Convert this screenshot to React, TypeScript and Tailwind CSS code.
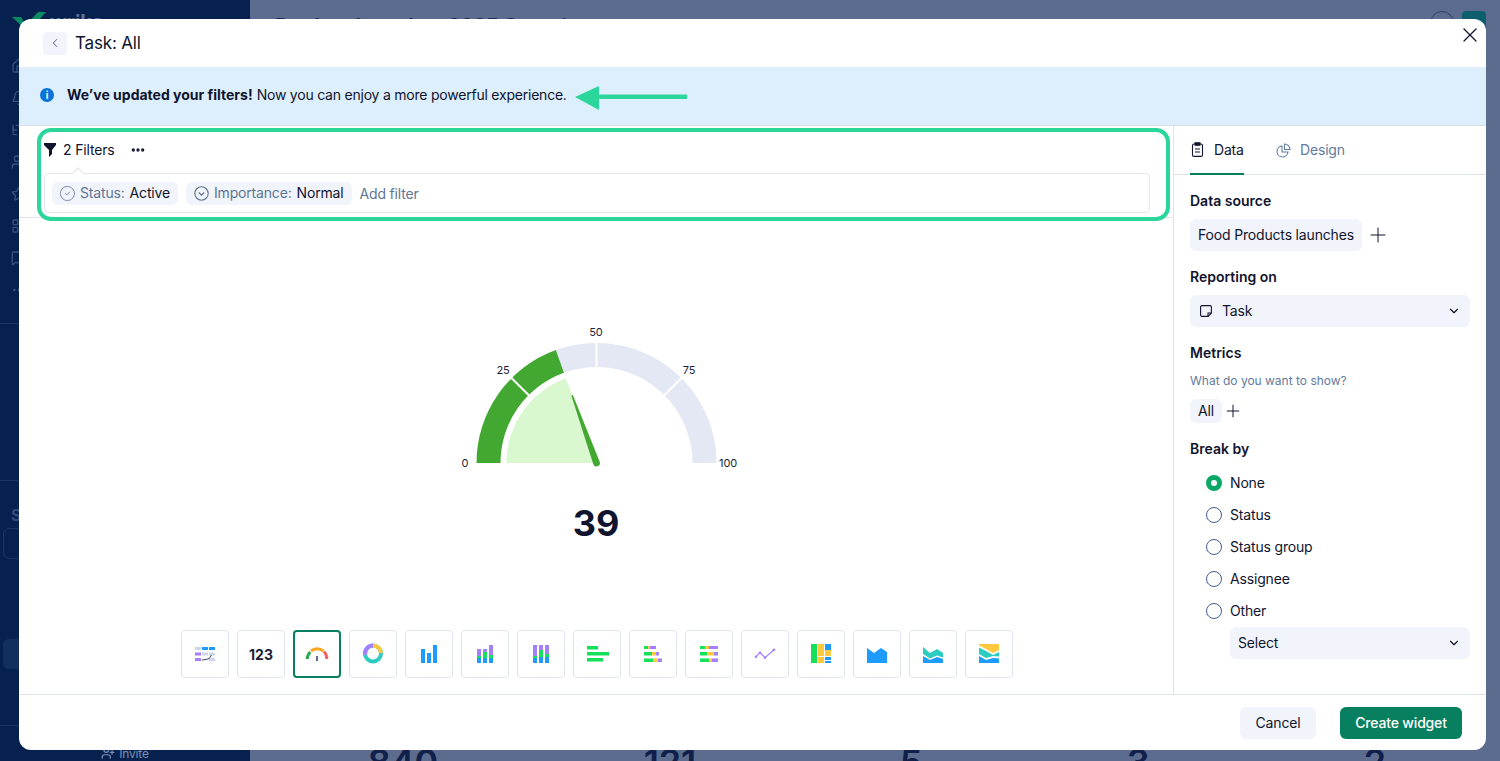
import { ReactNode } from "react"
import { Bell, ChevronDown, ChevronLeft, CircleCheck, Ellipsis, House, LayoutGrid, ListTree, MessageSquare, Plus, Star, UserPlus, Users, X } from "lucide-react"

const BLUE = "#1e9bff"
const PURPLE = "#a47fff"
const GREEN = "#14e05a"
const YELLOW = "#ffc83d"
const TEAL = "#2ccdc0"
const LIGHT = "#cdd6ea"

// point on a half circle, t=0 is the left end and t=1 the right end
function pt(cx: number, cy: number, r: number, t: number) {
  const a = Math.PI * (1 - t)
  return [cx + r * Math.cos(a), cy - r * Math.sin(a)]
}

function band(cx: number, cy: number, r1: number, r2: number, t1: number, t2: number) {
  const [ax, ay] = pt(cx, cy, r2, t1)
  const [bx, by] = pt(cx, cy, r2, t2)
  const [dx, dy] = pt(cx, cy, r1, t2)
  const [ex, ey] = pt(cx, cy, r1, t1)
  return `M${ax} ${ay}A${r2} ${r2} 0 0 1 ${bx} ${by}L${dx} ${dy}A${r1} ${r1} 0 0 0 ${ex} ${ey}Z`
}

function needle(cx: number, cy: number, len: number, t: number) {
  const [nx, ny] = pt(cx, cy, len, t)
  const ux = (nx - cx) / len
  const uy = (ny - cy) / len
  const tip = 0.8
  const base = 3.4
  return `M${nx - uy * tip} ${ny + ux * tip}L${cx - uy * base} ${cy + ux * base}A${base} ${base} 0 1 1 ${cx + uy * base} ${cy - ux * base}L${nx + uy * tip} ${ny - ux * tip}Z`
}

function Gauge() {
  const cx = 150.5
  const cy = 139
  const [sx, sy] = pt(cx, cy, 90, 0.39)
  return (
    <svg width="300" height="150" viewBox="0 0 300 150" className="shrink-0">
      <path d={band(cx, cy, 96, 120, 0.39, 1)} fill="#e4e8f4" />
      <path d={band(cx, cy, 96, 120, 0, 0.39)} fill="#43a832" />
      {[0.25, 0.5, 0.75].map((t) => {
        const [x1, y1] = pt(cx, cy, 94, t)
        const [x2, y2] = pt(cx, cy, 122, t)
        return <line key={t} x1={x1} y1={y1} x2={x2} y2={y2} stroke="#fff" strokeWidth="2" />
      })}
      <path d={`M${cx - 90} ${cy}A90 90 0 0 1 ${sx} ${sy}L${cx} ${cy}Z`} fill="#d9f8cf" />
      <path d={needle(cx, cy, 72, 0.39)} fill="#43a832" />
      <g fontSize="11" fill="#1a1f36" textAnchor="middle">
        <text x="19" y="143">0</text>
        <text x="57" y="50">25</text>
        <text x="150" y="12">50</text>
        <text x="243" y="50">75</text>
        <text x="282" y="143">100</text>
      </g>
    </svg>
  )
}

function Rects({ items }: { items: [number, number, number, number, string][] }) {
  return (
    <>
      {items.map(([x, y, w, h, c], i) => (
        <rect key={i} x={x} y={y} width={w} height={h} fill={c} />
      ))}
    </>
  )
}

const chartIcons: ReactNode[] = [
  <>
    <Rects items={[
      [14, 17, 6, 3, LIGHT], [21, 17, 6, 3, BLUE], [28, 17, 6, 3, BLUE],
      [14, 22.5, 6, 3, PURPLE], [21, 22.5, 6, 3, LIGHT], [28, 22.5, 6, 3, LIGHT],
      [14, 28, 6, 3, PURPLE], [28, 28, 6, 3, LIGHT],
    ]} />
    <path d="M21 30l4-.5 3-1 2.5-3.5" fill="none" stroke="#3c4a68" strokeWidth="1" />
  </>,
  null,
  <>
    <path d="M14.3 29a10 10 0 0 1 3-7" fill="none" stroke="#2fa84f" strokeWidth="3" />
    <path d="M18 21a10 10 0 0 1 12.5 0" fill="none" stroke="#ffa51f" strokeWidth="3" />
    <path d="M31 21.5a10 10 0 0 1 2.8 7.5" fill="none" stroke="#f5606a" strokeWidth="3" />
    <rect x="23.2" y="26" width="1.6" height="5" fill="#3c4a68" />
  </>,
  <>
    <circle cx="24" cy="23.5" r="8" fill="none" stroke={TEAL} strokeWidth="4" />
    <path d="M16.2 25A8 8 0 0 1 24 15.5" fill="none" stroke={PURPLE} strokeWidth="4" />
    <path d="M24 15.5A8 8 0 0 1 32 23" fill="none" stroke={YELLOW} strokeWidth="4" />
  </>,
  <Rects items={[[16, 19, 4, 14, BLUE], [22, 23, 4, 10, BLUE], [28, 15, 4, 18, BLUE]]} />,
  <Rects items={[
    [16, 19, 4, 7, PURPLE], [16, 26, 4, 2, GREEN], [16, 28, 4, 5, BLUE],
    [22, 19, 4, 3, PURPLE], [22, 22, 4, 6, GREEN], [22, 28, 4, 5, BLUE],
    [28, 15, 4, 10, PURPLE], [28, 25, 4, 3, GREEN], [28, 28, 4, 5, BLUE],
  ]} />,
  <Rects items={[
    [16, 15, 4, 11, PURPLE], [16, 26, 4, 2, GREEN], [16, 28, 4, 5, BLUE],
    [22, 15, 4, 5, PURPLE], [22, 20, 4, 7, GREEN], [22, 27, 4, 6, BLUE],
    [28, 15, 4, 9, PURPLE], [28, 24, 4, 3, GREEN], [28, 27, 4, 6, BLUE],
  ]} />,
  <Rects items={[[14, 16, 11, 3.5, GREEN], [14, 22, 22, 3.5, GREEN], [14, 28, 16, 3.5, GREEN]]} />,
  <Rects items={[
    [15, 16, 4, 3, GREEN], [19, 16, 2, 3, YELLOW], [21, 16, 6, 3, PURPLE],
    [15, 22, 8, 3.5, GREEN], [23, 22, 4, 3.5, YELLOW], [27, 22, 3, 3.5, PURPLE],
    [15, 28.5, 9, 3.5, GREEN], [24, 28.5, 5, 3.5, YELLOW], [29, 28.5, 4, 3.5, PURPLE],
  ]} />,
  <Rects items={[
    [15, 16, 5, 3, GREEN], [20, 16, 4, 3, YELLOW], [24, 16, 9, 3, PURPLE],
    [15, 22, 7, 3.5, GREEN], [22, 22, 7, 3.5, YELLOW], [29, 22, 4, 3.5, PURPLE],
    [15, 28.5, 9, 3.5, GREEN], [24, 28.5, 3, 3.5, YELLOW], [27, 28.5, 6, 3.5, PURPLE],
  ]} />,
  <g fill={PURPLE}>
    <path d="M15 26.7L19 22.7L24 27.7L33 19.7" fill="none" stroke={PURPLE} strokeWidth="1.2" />
    <circle cx="15" cy="26.7" r="1.3" />
    <circle cx="19" cy="22.7" r="1.3" />
    <circle cx="24" cy="27.7" r="1.3" />
    <circle cx="33" cy="19.7" r="1.3" />
  </g>,
  <Rects items={[
    [14, 14, 6, 19, GREEN], [21, 14, 6, 12, YELLOW], [21, 27, 6, 6, YELLOW],
    [28, 14, 6, 6, BLUE], [28, 20, 6, 6, YELLOW], [28, 27, 6, 3, BLUE], [28, 31, 6, 2, BLUE],
  ]} />,
  <path d="M14 18L21 23L28 18L34 22V33H14Z" fill={BLUE} />,
  <>
    <path d="M14 17L21 23L28 19L34 23V27.5L28 25.5L21 28.5L14 24Z" fill={TEAL} />
    <path d="M14 26L21 30L28 27L34 29V33H14Z" fill={BLUE} />
  </>,
  <>
    <path d="M14 14H34V20L28 23L21 19L14 15.5Z" fill={YELLOW} />
    <path d="M14 17.5L21 21L28 25L34 22V26.5L28 26L21 28L14 24Z" fill={TEAL} />
    <path d="M14 26L21 30L28 28L34 28.5V33H14Z" fill={BLUE} />
  </>,
]

function ChartPicker() {
  return (
    <div className="flex gap-2 pb-4 mt-auto ml-[2px]">
      {chartIcons.map((icon, i) => (
        <div
          key={i}
          className={
            i === 2
              ? "w-12 h-12 rounded border-2 border-[#087f5f] bg-white flex items-center justify-center"
              : "w-12 h-12 rounded border border-[#e0e4f1] bg-white flex items-center justify-center"
          }
        >
          {icon ? (
            <svg width="48" height="48" viewBox="0 0 48 48" className="shrink-0">{icon}</svg>
          ) : (
            <span className="text-[14px] font-bold tracking-normal text-[#1a1f36]">123</span>
          )}
        </div>
      ))}
    </div>
  )
}

function FilterChip({ label, value, icon }: { label: string; value: string; icon: ReactNode }) {
  return (
    <div className="h-[23px] px-2 rounded-md bg-[#f1f4fa] flex items-center gap-[5px] text-sm text-[#5f7595]">
      {icon}
      <span>{label}</span>
      <span className="text-[#10142e]">{value}</span>
    </div>
  )
}

function Filters() {
  return (
    <div className="h-[92px] shrink-0 border-b border-[#dfe3ee] pl-[25px] pr-[23px]">
      <div className="h-[47px] flex items-center">
        <svg width="12" height="14" viewBox="0 0 12 14" className="shrink-0">
          <path d="M0 0H12V2L8 7V11L5 14V7L0 2Z" fill="#10142e" />
        </svg>
        <span className="ml-[7px] text-sm text-[#10142e]">2 Filters</span>
        <Ellipsis size={16} strokeWidth={3} className="ml-[16px] text-[#10142e]" />
      </div>
      <div className="relative h-10 border border-[#e3e6f0] rounded flex items-center pl-[7px] gap-2">
        <div className="absolute -top-[5px] left-[29px] w-2 h-2 rotate-45 bg-white border-l border-t border-[#e3e6f0]" />
        <FilterChip label="Status:" value="Active" icon={<CircleCheck size={17} strokeWidth={1.1} className="-ml-px -mr-px" />} />
        <FilterChip
          label="Importance:"
          value="Normal"
          icon={
            <svg width="15" height="15" viewBox="0 0 15 15" fill="none" stroke="currentColor" strokeWidth="1.1" className="shrink-0">
              <circle cx="7.5" cy="7.5" r="6.7" />
              <path d="M4.8 6.5l2.7 2.7 2.7-2.7" />
            </svg>
          }
        />
        <span className="text-sm mt-[2px] text-[#5f7595]">Add filter</span>
      </div>
    </div>
  )
}

function SectionTitle({ children }: { children: ReactNode }) {
  return <div className="text-sm font-semibold tracking-normal text-[#10142e] leading-5">{children}</div>
}

function Radio({ label, checked }: { label: string; checked?: boolean }) {
  return (
    <div className="h-8 flex items-center gap-2 text-sm text-[#10142e]">
      {checked ? (
        <div className="w-4 h-4 rounded-full border-[5px] border-[#0aa866] bg-white" />
      ) : (
        <div className="w-4 h-4 rounded-full border border-[#3f5f8c] bg-white" />
      )}
      {label}
    </div>
  )
}

function SidePanel() {
  return (
    <div className="w-[313px] shrink-0 border-l border-[#dfe3ee] flex flex-col">
      <div className="h-[49px] shrink-0 border-b border-[#dfe3ee] flex pl-4 text-sm">
        <div className="w-[54px] h-[49px] border-b-2 border-[#087f5f] flex items-center gap-[10px] pl-[1px] text-[#10142e]">
          <svg width="13" height="15" viewBox="0 0 13 15" fill="none" stroke="#10142e" strokeWidth="1.1" className="shrink-0">
            <rect x="1.5" y="2" width="10" height="12.4" rx="1.5" />
            <path d="M4 .8h5v2.4H4Z" fill="#10142e" />
            <path d="M4 7h5M4 10h5" />
          </svg>
          Data
        </div>
        <div className="ml-[32px] flex items-center gap-[9px] text-[#5f7b9e]">
          <svg width="15" height="15" viewBox="0 0 15 15" fill="none" stroke="currentColor" strokeWidth="1.1" className="shrink-0">
            <path d="M6 3a5.5 5.5 0 1 0 6 6H6Z" />
            <path d="M8.5 1v5.5H14A5.5 5.5 0 0 0 8.5 1Z" />
          </svg>
          Design
        </div>
      </div>
      <div className="px-4 pt-4 flex flex-col text-sm text-[#10142e]">
        <SectionTitle>Data source</SectionTitle>
        <div className="mt-2 flex items-center gap-1">
          <div className="h-8 px-2 rounded-md bg-[#f1f4fa] flex items-center">Food Products launches</div>
          <Plus size={24} strokeWidth={1} />
        </div>
        <div className="mt-4">
          <SectionTitle>Reporting on</SectionTitle>
        </div>
        <div className="mt-2 h-8 w-[280px] pl-[10px] pr-[9px] rounded-md bg-[#f1f4fa] flex items-center gap-[10px]">
          <svg width="12" height="12" viewBox="0 0 12 12" fill="none" stroke="#10142e" strokeWidth="1.1" className="shrink-0">
            <path d="M8 11.4H2A1.4 1.4 0 0 1 .6 10V2A1.4 1.4 0 0 1 2 .6h8A1.4 1.4 0 0 1 11.4 2v6Z" />
            <path d="M8 11.4V8h3.4" />
          </svg>
          Task
          <ChevronDown size={14} strokeWidth={2} className="ml-auto" />
        </div>
        <div className="mt-4">
          <SectionTitle>Metrics</SectionTitle>
        </div>
        <div className="mt-[10px] text-xs tracking-normal leading-4 text-[#5f7b9e]">What do you want to show?</div>
        <div className="mt-[10px] flex items-center gap-px">
          <div className="h-6 w-8 rounded-md bg-[#f1f4fa] flex items-center justify-center">All</div>
          <Plus size={20} strokeWidth={1.2} />
        </div>
        <div className="mt-4">
          <SectionTitle>Break by</SectionTitle>
        </div>
        <div className="mt-[8px] pl-4 flex flex-col">
          <Radio label="None" checked />
          <Radio label="Status" />
          <Radio label="Status group" />
          <Radio label="Assignee" />
          <Radio label="Other" />
        </div>
        <div className="ml-10 h-8 w-[240px] pl-2 pr-[9px] rounded-md bg-[#f1f4fa] flex items-center">
          Select
          <ChevronDown size={14} strokeWidth={2} className="ml-auto" />
        </div>
      </div>
    </div>
  )
}

function Backdrop() {
  return (
    <div className="h-[761px] flex overflow-hidden bg-[#5c6c8f]">
      <div className="w-[250px] shrink-0 bg-[#07214f] flex flex-col text-[#35507f]">
        <div className="h-[58px] shrink-0 pl-3 pt-[12px] flex">
          <svg width="34" height="14" viewBox="0 0 34 14" className="shrink-0">
            <path d="M0 5H9L14 13L26 0H34L16 20Z" fill="#0c8a63" />
          </svg>
          <span className="ml-1 text-xl font-bold leading-5 text-[#5c7397]">wrike</span>
        </div>
        <div className="flex flex-col gap-4 pl-[11px]">
          <House size={16} />
          <Bell size={16} />
          <ListTree size={16} />
          <Users size={16} />
          <Star size={16} />
          <LayoutGrid size={16} />
          <MessageSquare size={16} />
          <Ellipsis size={16} />
        </div>
        <div className="mt-[25px] border-t border-[#1c3664]" />
        <div className="mt-[156px] border-t border-[#1c3664]" />
        <div className="mt-[22px] pl-[11px] text-base font-semibold leading-6">S</div>
        <div className="mt-[1px] ml-[3px] w-[40px] h-[31px] rounded-md border border-[#1c3664]" />
        <div className="mt-[80px] ml-[3px] w-[200px] h-[30px] rounded-md bg-[#12305e]" />
        <div className="mt-auto border-t border-[#1c3664] h-[36px] pt-[20px] flex justify-center gap-1 text-xs text-[#7b90b5]">
          <UserPlus size={14} />
          Invite
        </div>
      </div>
      <div className="flex-1 flex flex-col">
        <div className="h-[50px] px-[25px] pt-[12px] flex text-xl font-bold text-[#1c2a4d]">
          Product launches 2025 Overview
          <div className="ml-auto flex gap-[8px] -mr-[11px] -mt-[1px]">
            <div className="w-6 h-6 rounded-full border border-[#2e3f63]" />
            <div className="w-6 h-6 rounded bg-[#0d5f6e]" />
          </div>
        </div>
        <div className="mt-auto h-[17px] flex pl-5 text-[36px] leading-none font-semibold text-[#10204a] text-center">
          <div className="w-[266px]">840</div>
          <div className="w-[268px]">121</div>
          <div className="w-[214px]">5</div>
          <div className="w-[240px]">3</div>
          <div className="w-[234px]">2</div>
        </div>
      </div>
    </div>
  )
}

function Modal() {
  return (
    <div className="absolute left-[19px] top-[19px] w-[1467px] h-[731px] rounded-xl bg-white flex flex-col overflow-hidden">
      <div className="h-12 shrink-0 flex items-center pl-6 pr-1">
        <div className="w-6 h-[23px] rounded bg-[#f1f4fa] flex items-center justify-center text-[#3c4a68]">
          <ChevronLeft size={14} strokeWidth={1.5} />
        </div>
        <span className="ml-2 mt-[2px] text-[17px] text-[#10142e]">Task: All</span>
        <X size={24} strokeWidth={1.2} className="ml-auto -mt-[16px] text-[#10142e]" />
      </div>
      <div className="h-[59px] shrink-0 bg-[#ddeefc] border-b border-[#d5dde9] flex items-center pb-[2px] pl-[21px] text-sm text-[#10142e]">
        <div className="w-[14px] h-[14px] rounded-full bg-[#0b74d9] flex items-center justify-center text-white text-[10px] font-bold leading-none">i</div>
        <span className="ml-[13px] font-bold tracking-normal">We’ve updated your filters!</span>
        <span className="ml-1 tracking-[-0.22px]">Now you can enjoy a more powerful experience.</span>
      </div>
      <div className="flex-1 flex min-h-0">
        <div className="flex-1 flex flex-col min-w-0">
          <Filters />
          <div className="flex-1 flex flex-col items-center pt-[106px] min-h-0">
            <Gauge />
            <div className="mt-[27px] text-[36px] leading-[44px] font-bold tracking-normal text-[#10142e]">39</div>
            <ChartPicker />
          </div>
        </div>
        <SidePanel />
      </div>
      <div className="h-14 shrink-0 border-t border-[#dfe3ee] flex items-center justify-end gap-6 pr-6 text-sm">
        <button className="w-[76px] h-8 rounded-md bg-[#f1f4fa] text-[#10142e]">Cancel</button>
        <button className="w-[122px] h-8 rounded-md bg-[#087f5f] text-white font-medium">Create widget</button>
      </div>
    </div>
  )
}

export default function App() {
  return (
    <div className="relative h-[761px] overflow-hidden tracking-[-0.17px] [font-family:Inter,sans-serif]">
      <Backdrop />
      <Modal />
      {/* the green callouts drawn on top of the screenshot */}
      <div className="absolute left-[37px] top-[128px] w-[1133px] h-[93px] rounded-[14px] border-4 border-[#2bd69b]" />
      <svg width="116" height="28" viewBox="0 0 116 28" className="absolute left-[574px] top-[83px]">
        <path d="M1 14L25 3V11.5H113V16H25V27Z" fill="#2bd69b" />
      </svg>
    </div>
  )
}
